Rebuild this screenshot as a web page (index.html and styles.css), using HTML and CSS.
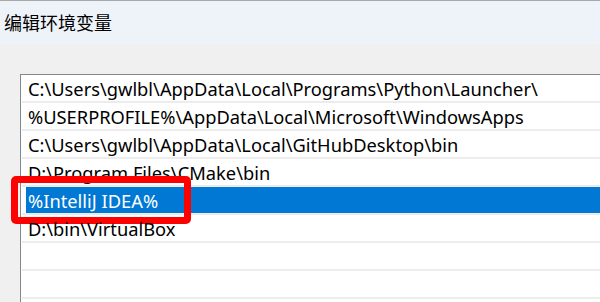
FILE: index.html
```html
<!DOCTYPE html>
<html>
<head>
<meta charset="utf-8">
<link rel="stylesheet" href="styles.css">
</head>
<body>
<div class="titlebar"><span class="title">编辑环境变量</span></div>
<div class="content">
  <div class="listbox">
    <div class="row">C:\Users\gwlbl\AppData\Local\Programs\Python\Launcher\</div>
    <div class="row">%USERPROFILE%\AppData\Local\Microsoft\WindowsApps</div>
    <div class="row">C:\Users\gwlbl\AppData\Local\GitHubDesktop\bin</div>
    <div class="row">D:\Program Files\CMake\bin</div>
    <div class="row selected">%IntelliJ IDEA%<span class="mark"></span></div>
    <div class="row">D:\bin\VirtualBox</div>
    <div class="row"></div>
    <div class="row"></div>
  </div>
</div>
</body>
</html>
```
FILE: styles.css
```css
html, body {
  margin: 0;
  padding: 0;
}
body {
  width: 600px;
  height: 302px;
  overflow: hidden;
  background: #f0f0f0;
  font-family: "Noto Sans", "Noto Sans CJK SC", sans-serif;
  color: #000;
}
.titlebar {
  background: #eef3fa;
  border-top: 1px solid #a8a8a8;
  box-sizing: border-box;
  height: 44px;
  padding-left: 4px;
  display: flex;
  align-items: center;
}
.title {
  font-family: "Noto Sans CJK SC", sans-serif;
  font-size: 18px;
  line-height: 20px;
  margin-top: -1px;
}
.content {
  padding: 30px 0 0 20px;
}
.listbox {
  background: #fff;
  border-top: 1px solid #828790;
  border-left: 1px solid #828790;
  padding-left: 1px;
  height: 227px;
}
.row {
  position: relative;
  height: 28px;
  box-sizing: border-box;
  border-bottom: 2px solid #ececec;
  padding-left: 6px;
  font-size: 18.3px;
  line-height: 27px;
  white-space: nowrap;
}
.row.selected {
  background: linear-gradient(to right, #fff 4px, #0078d4 4px);
  color: #fff;
}
.mark {
  position: absolute;
  left: -11px;
  top: -11px;
  width: 180px;
  height: 48px;
  box-sizing: border-box;
  border: 7px solid #ff0000;
  border-radius: 5px;
}
```
